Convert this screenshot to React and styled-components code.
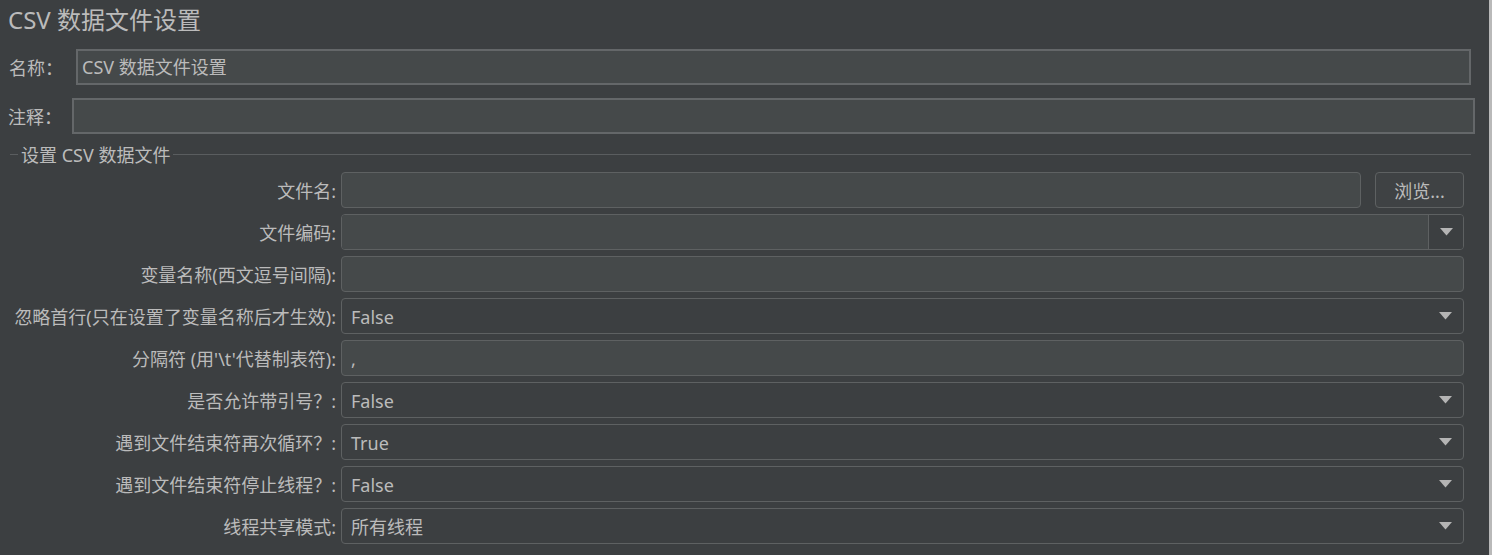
import styled, { createGlobalStyle } from "styled-components";

const GlobalStyle = createGlobalStyle`
  html, body {
    margin: 0;
    padding: 0;
    background: #3c3f41;
  }
  body {
    font-family: "Noto Sans", "Noto Sans CJK SC", sans-serif;
    color: #bbbbbb;
  }
`;

const fields = [
  { label: "文件名:", kind: "file" },
  { label: "文件编码:", kind: "editcombo" },
  { label: "变量名称(西文逗号间隔):", kind: "text" },
  { label: "忽略首行(只在设置了变量名称后才生效):", kind: "combo", value: "False" },
  { label: "分隔符 (用'\\t'代替制表符):", kind: "text", value: "," },
  { label: "是否允许带引号？:", kind: "combo", value: "False" },
  { label: "遇到文件结束符再次循环？:", kind: "combo", value: "True" },
  { label: "遇到文件结束符停止线程？:", kind: "combo", value: "False" },
  { label: "线程共享模式:", kind: "combo", value: "所有线程" },
];

function Arrow() {
  return (
    <svg width="13" height="8" viewBox="0 0 13 8">
      <polygon points="0,0 13,0 6.5,7.5" fill="#b4b4b4" />
    </svg>
  );
}

function Field({ kind, value }) {
  if (kind === "file") {
    return (
      <FileWrap>
        <TextBox>{value}</TextBox>
        <Button>浏览...</Button>
      </FileWrap>
    );
  }
  if (kind === "editcombo") {
    return (
      <EditCombo>
        <EditPart>{value}</EditPart>
        <ArrowButton>
          <Arrow />
        </ArrowButton>
      </EditCombo>
    );
  }
  if (kind === "combo") {
    return (
      <Combo>
        <span>{value}</span>
        <Arrow />
      </Combo>
    );
  }
  return <TextBox>{value}</TextBox>;
}

export default function App() {
  return (
    <>
      <GlobalStyle />
      <Page>
        <Title>CSV 数据文件设置</Title>
        <TopRow $right={18}>
          <TopLabel $gap={13}>名称：</TopLabel>
          <TopInput>CSV 数据文件设置</TopInput>
        </TopRow>
        <TopRow $right={14} $top={13}>
          <TopLabel $gap={10}>注释：</TopLabel>
          <TopInput />
        </TopRow>
        <GroupHeader>
          <ShortLine />
          <GroupTitle>设置 CSV 数据文件</GroupTitle>
          <LongLine />
        </GroupHeader>
        <Form>
          {fields.map((f) => (
            <Row key={f.label}>
              <Label>{f.label}</Label>
              <Field kind={f.kind} value={f.value} />
            </Row>
          ))}
        </Form>
      </Page>
    </>
  );
}

const Page = styled.div`
  width: 1489px;
  height: 555px;
  border-right: 3px solid #b9b9b9;
  overflow: hidden;
`;

const Title = styled.div`
  padding: 5px 8px 0;
  font-size: 24px;
  line-height: 30px;
`;

const TopRow = styled.div`
  display: flex;
  align-items: center;
  height: 36px;
  margin-top: ${(p) => p.$top ?? 14}px;
  padding-left: 9px;
  padding-right: ${(p) => p.$right}px;
`;

const TopLabel = styled.div`
  font-size: 18px;
  line-height: 34px;
  padding-top: 2px;
  margin-right: ${(p) => p.$gap}px;
  margin-left: ${(p) => (p.$gap === 10 ? -1 : 0)}px;
`;

const TopInput = styled.div`
  flex: 1;
  height: 36px;
  box-sizing: border-box;
  border: 2px solid #646769;
  background: #45494a;
  padding: 1px 4px 0;
  font-size: 18px;
  line-height: 31px;
`;

const GroupHeader = styled.div`
  display: flex;
  align-items: center;
  margin-top: 8px;
  height: 24px;
  padding-left: 10px;
  padding-right: 18px;
`;

const ShortLine = styled.div`
  width: 8px;
  height: 1px;
  background: #5a5d5f;
`;

const LongLine = styled.div`
  flex: 1;
  height: 1px;
  background: #5a5d5f;
`;

const GroupTitle = styled.div`
  font-size: 18px;
  line-height: 22px;
  padding: 2px 3px 0;
`;

const Form = styled.div`
  display: flex;
  flex-direction: column;
  gap: 6px;
  margin-top: 6px;
  padding-right: 25px;
`;

const Row = styled.div`
  display: flex;
  align-items: center;
  height: 36px;
  gap: 5px;
`;

const Label = styled.div`
  width: 336px;
  flex-shrink: 0;
  text-align: right;
  font-size: 18px;
  line-height: 34px;
  padding-top: 2px;
  white-space: nowrap;
`;

const boxBase = `
  height: 36px;
  box-sizing: border-box;
  border: 1px solid #5e6162;
  border-radius: 4px;
  font-size: 18px;
  line-height: 32px;
`;

const TextBox = styled.div`
  ${boxBase}
  flex: 1;
  background: #45494a;
  padding: 2px 9px 0;
`;

const FileWrap = styled.div`
  flex: 1;
  display: flex;
  gap: 14px;
`;

const Button = styled.div`
  ${boxBase}
  width: 89px;
  padding-top: 2px;
  text-align: center;
  background: #3f4244;
  border-color: #5e6162;
`;

const Combo = styled.div`
  ${boxBase}
  flex: 1;
  display: flex;
  align-items: center;
  justify-content: space-between;
  padding: 0 11px 0 9px;
  background: #3c3f41;

  span {
    padding-top: 2px;
  }
`;

const EditCombo = styled.div`
  ${boxBase}
  flex: 1;
  display: flex;
  overflow: hidden;
`;

const EditPart = styled.div`
  flex: 1;
  background: #45494a;
  border-right: 1px solid #5e6162;
  padding: 2px 9px 0;
`;

const ArrowButton = styled.div`
  width: 34px;
  display: flex;
  align-items: center;
  justify-content: center;
  background: #3c3f41;
`;
